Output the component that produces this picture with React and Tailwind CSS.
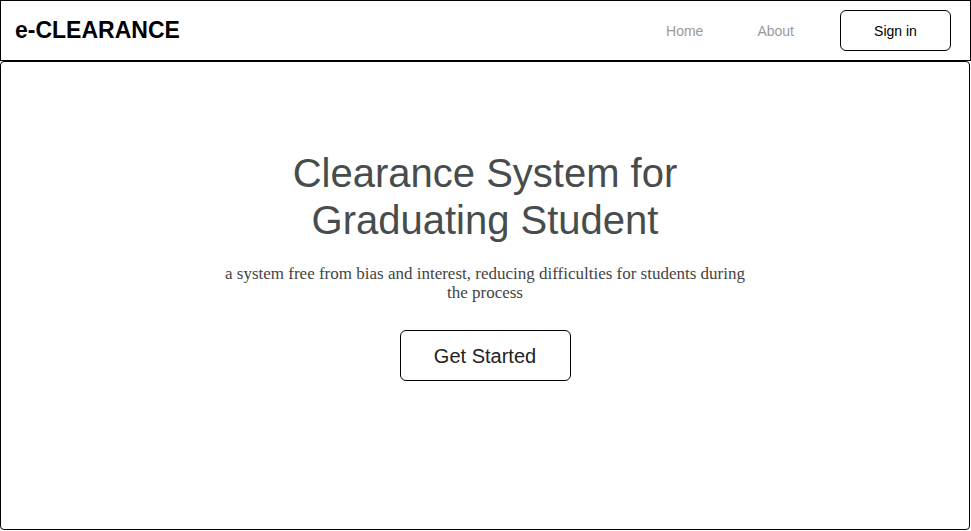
import React from "react";

export default function App() {
  return (
    <div className="w-[971px] h-[531px] bg-white flex flex-col font-['Liberation_Sans',Arial,sans-serif]">
      <header className="h-[61px] border border-black flex items-center justify-between pl-[14px] pr-[19px] shrink-0">
        <h1 className="text-[23px] font-bold text-black">e-CLEARANCE</h1>
        <nav className="flex items-center">
          <a className="pt-[2px] text-[14px] text-[#9a9a9a] mr-[54px]">Home</a>
          <a className="pt-[2px] text-[14px] text-[#9a9a9a] mr-[46px]">About</a>
          <button className="w-[111px] h-[41px] pt-[2px] border border-black rounded-[6px] text-[14px] text-black">
            Sign in
          </button>
        </nav>
      </header>

      <main className="flex-1 mr-[1px] mb-[1px] border border-black rounded-[4px] flex flex-col items-center pt-[88px]">
        <h2 className="text-[40px] leading-[47px] text-[#474c4c] text-center">
          Clearance System for
          <br />
          Graduating Student
        </h2>
        <p className="mt-[20px] w-[530px] text-center font-['Liberation_Serif',serif] text-[17px] leading-[19px] text-[#444]">
          a system free from bias and interest, reducing difficulties for students during the process
        </p>
        <button className="mt-[28px] w-[171px] h-[51px] pt-[1px] border border-black rounded-[6px] text-[20px] text-[#222]">
          Get Started
        </button>
      </main>
    </div>
  );
}
